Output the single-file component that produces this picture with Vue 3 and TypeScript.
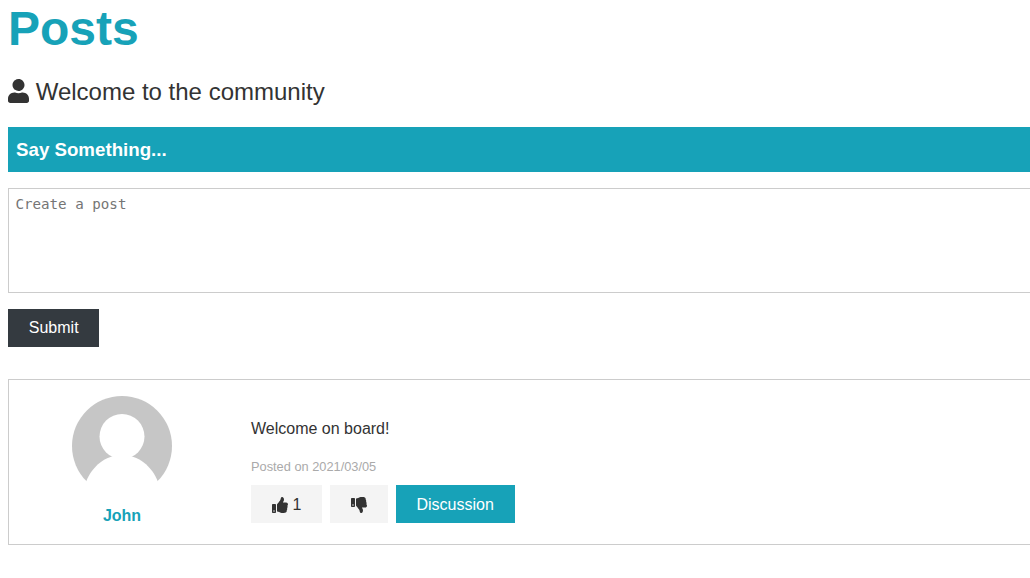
<script setup lang="ts">
import { ref } from "vue";

const draft = ref("");

const post = {
    author: "John",
    text: "Welcome on board!",
    date: "2021/03/05",
    likes: 1,
};
</script>

<template>
    <section class="page">
        <h1 class="title">Posts</h1>
        <p class="lead">
            <svg class="user-icon" viewBox="0 0 448 512" aria-hidden="true">
                <path
                    d="M224 256c70.7 0 128-57.3 128-128S294.7 0 224 0 96 57.3 96 128s57.3 128 128 128zm89.6 32h-16.7c-22.2 10.2-46.9 16-72.9 16s-50.6-5.8-72.9-16h-16.7C60.2 288 0 348.2 0 422.4V464c0 26.5 21.5 48 48 48h352c26.5 0 48-21.5 48-48v-41.6c0-74.2-60.2-134.4-134.4-134.4z"
                />
            </svg>
            Welcome to the community
        </p>

        <form class="post-form" @submit.prevent>
            <div class="post-form-header">
                <h3>Say Something...</h3>
            </div>
            <textarea
                v-model="draft"
                class="post-input"
                placeholder="Create a post"
            ></textarea>
            <button type="submit" class="btn btn-dark">Submit</button>
        </form>

        <article class="post">
            <div class="author">
                <svg class="avatar" viewBox="0 0 100 100" aria-hidden="true">
                    <circle cx="50" cy="50" r="50" fill="#c6c6c6" />
                    <circle cx="50" cy="40.5" r="22.5" fill="#fff" />
                    <path
                        d="M14 86C20 70 34 59 50 59s30 11 36 27v14H14z"
                        fill="#fff"
                    />
                </svg>
                <h4>{{ post.author }}</h4>
            </div>
            <div class="body">
                <p class="text">{{ post.text }}</p>
                <p class="date">Posted on {{ post.date }}</p>
                <div class="actions">
                    <button type="button" class="btn btn-light">
                        <svg class="thumb" viewBox="0 0 512 512" aria-hidden="true">
                            <path
                                d="M104 224H24c-13.255 0-24 10.745-24 24v240c0 13.255 10.745 24 24 24h80c13.255 0 24-10.745 24-24V248c0-13.255-10.745-24-24-24zM64 472c-13.255 0-24-10.745-24-24s10.745-24 24-24 24 10.745 24 24-10.745 24-24 24zM384 81.452c0 42.416-25.97 66.208-33.277 94.548h101.723c33.397 0 59.397 27.746 59.553 58.098.084 17.938-7.546 37.249-19.439 49.197l-.11.11c9.836 23.337 8.237 56.037-9.308 79.469 8.681 25.895-.069 57.704-16.382 74.757 4.298 17.598 2.244 32.575-6.148 44.632C440.202 511.587 389.616 512 346.839 512l-2.845-.001c-48.287-.017-87.806-17.598-119.56-31.725-15.957-7.099-36.821-15.887-52.651-16.178-6.54-.12-11.783-5.457-11.783-11.998v-213.77c0-3.2 1.282-6.271 3.558-8.521 39.614-39.144 56.648-80.587 89.117-113.111 14.804-14.832 20.188-37.236 25.393-58.902C282.515 39.293 291.817 0 312 0c24 0 72 8 72 81.452z"
                            />
                        </svg>
                        <span class="count">{{ post.likes }}</span>
                    </button>
                    <button type="button" class="btn btn-light">
                        <svg class="thumb" viewBox="0 0 512 512" aria-hidden="true">
                            <path
                                d="M0 56v240c0 13.255 10.745 24 24 24h80c13.255 0 24-10.745 24-24V56c0-13.255-10.745-24-24-24H24C10.745 32 0 42.745 0 56zm40 200c0-13.255 10.745-24 24-24s24 10.745 24 24-10.745 24-24 24-24-10.745-24-24zm272 256c-20.183 0-29.485-39.293-33.931-57.795-5.206-21.666-10.589-44.07-25.393-58.902-32.469-32.524-49.503-73.967-89.117-113.111a11.98 11.98 0 0 1-3.558-8.521V59.901c0-6.541 5.243-11.878 11.783-11.998 15.831-.29 36.694-9.079 52.651-16.178C256.189 17.598 295.709.017 343.995 0h2.844c42.777 0 93.363.413 113.774 29.737 8.392 12.057 10.446 27.034 6.148 44.632 16.312 17.053 25.063 48.863 16.382 74.757 17.544 23.432 19.143 56.132 9.308 79.469l.11.11c11.893 11.949 19.523 31.259 19.439 49.197-.156 30.352-26.157 58.098-59.553 58.098H350.723C358.03 364.34 384 388.132 384 430.548 384 504 336 512 312 512z"
                            />
                        </svg>
                    </button>
                    <button type="button" class="btn btn-primary">Discussion</button>
                </div>
            </div>
        </article>
    </section>
</template>

<style>
html,
body {
    overflow: hidden;
}
</style>

<style scoped>
.page {
    width: 1036px;
    margin: 0 8px;
    font-family: "Liberation Sans", Arial, sans-serif;
    font-size: 16px;
    line-height: 1.6;
    color: #333;
}

.title {
    margin: 0 0 15px;
    font-size: 48px;
    line-height: 1.2;
    color: #17a2b8;
}

.lead {
    margin: 0 0 16px;
    font-size: 24px;
}

.user-icon {
    width: 21px;
    height: 24px;
    fill: #333;
    vertical-align: -3px;
}

.post-form-header {
    padding: 8px;
    background: #17a2b8;
    color: #fff;
}

.post-form-header h3 {
    margin: 0;
    height: 29px;
    font-size: 18.72px;
}

.post-input {
    display: block;
    box-sizing: border-box;
    width: 100%;
    height: 105px;
    margin: 16px 0;
    padding: 7px 6.4px;
    border: 1px solid #ccc;
    font-family: "DejaVu Sans Mono", monospace;
    font-size: 14.2px;
    resize: none;
}

.btn {
    display: inline-flex;
    align-items: center;
    height: 38px;
    padding: 0 20.8px;
    border: none;
    font: inherit;
    cursor: pointer;
}

.btn-dark {
    background: #343a40;
    color: #fff;
}

.btn-light {
    background: #f4f4f4;
    color: #333;
}

.btn-primary {
    background: #17a2b8;
    color: #fff;
}

.post {
    display: grid;
    grid-template-columns: 1fr 4fr;
    gap: 32px;
    align-items: center;
    margin-top: 32px;
    padding: 16px;
    border: 1px solid #ccc;
}

.author {
    display: flex;
    flex-direction: column;
    align-items: center;
}

.avatar {
    width: 100px;
    height: 100px;
    margin-bottom: 7px;
}

.author h4 {
    margin: 0;
    height: 25px;
    font-size: 16px;
    color: #17a2b8;
}

.text {
    margin: 17px 0 15px;
}

.date {
    margin: 0 0 7px;
    font-size: 12.8px;
    color: #aaa;
}

.actions {
    display: flex;
    gap: 8px;
    margin-bottom: 2px;
}

.actions .btn {
    padding-top: 2px;
}

.thumb {
    width: 16px;
    height: 16px;
    fill: #333;
}

.count {
    margin-left: 4.6px;
}
</style>
